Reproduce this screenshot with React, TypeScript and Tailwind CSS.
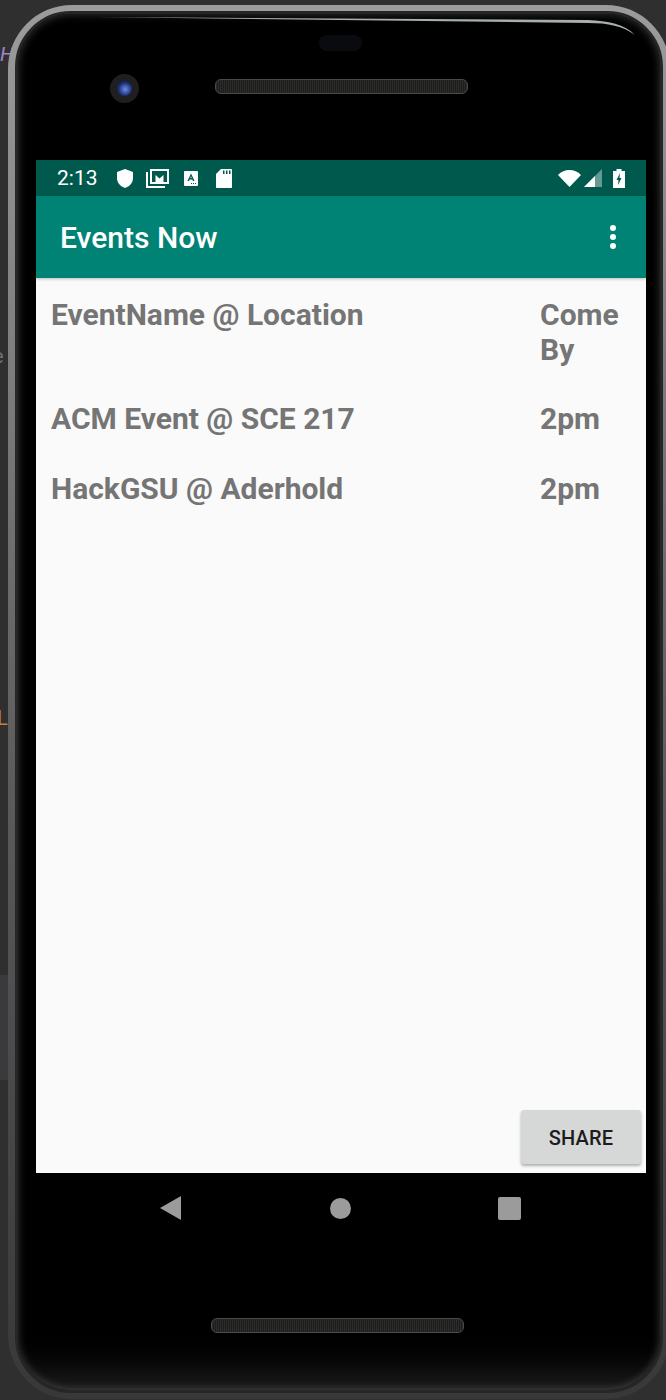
import React from "react";

const font = { fontFamily: "Roboto, sans-serif" };

function Speaker({ className }: { className: string }) {
  return (
    <div
      className={`h-[15px] w-[253px] rounded-[6px] border border-[#4a4a4a] bg-[repeating-linear-gradient(90deg,#2c2c2a_0px,#2c2c2a_1px,#1d1d1c_1px,#1d1d1c_2px)] ${className}`}
    />
  );
}

function StatusBar() {
  return (
    <div className="flex h-9 items-center justify-between bg-[#00594d] pl-[21px] pr-[21px] text-white">
      <div className="flex items-center">
        <span className="w-[60px] text-[21px] leading-none">2:13</span>
        <svg width="16" height="19" viewBox="0 0 16 19">
          <path d="M8 0 L16 3 V9 C16 14 12.5 17.5 8 19 C3.5 17.5 0 14 0 9 V3 Z" fill="#fff" />
        </svg>
        <svg width="23" height="19" viewBox="0 0 23 19" className="ml-[13px]">
          <path d="M4 0 H23 V15 H4 Z" fill="#fff" />
          <path d="M6 2 H21 V13 H17.5 V6 L13.500 9.500 L9.500 6 V13 H6 Z" fill="#00594d" />
          <path d="M0 3 H2 V17 H19 V19 H0 Z" fill="#fff" />
        </svg>
        <svg width="14" height="15" viewBox="0 0 14 15" className="ml-[15px]">
          <rect width="14" height="15" rx="1" fill="#fff" />
          <path d="M7 2.5 L10.6 10 H9 L8.3 8.4 H5.7 L5 10 H3.4 Z M6.3 7 H7.7 L7 5.3 Z" fill="#00594d" fillRule="evenodd" />
          <path d="M7 12 H8 V13 H7 Z M9 12 H10 V13 H9 Z M11 12 H12 V13 H11 Z" fill="#00594d" />
        </svg>
        <svg width="16" height="19" viewBox="0 0 16 19" className="ml-[18px]">
          <path d="M5 0 H15 C15.6 0 16 .4 16 1 V18 C16 18.6 15.6 19 15 19 H1 C.4 19 0 18.6 0 18 V5 Z" fill="#fff" />
          <path d="M7 1.5 H8.5 V5 H7 Z M10 1.5 H11.5 V5 H10 Z M13 1.5 H14.5 V5 H13 Z" fill="#00594d" />
        </svg>
      </div>
      <div className="flex items-center">
        <svg width="23" height="17" viewBox="0 0 23 17">
          <path d="M0 5 C6 -1.600 17 -1.600 23 5 L11.500 17 Z" fill="#fff" />
        </svg>
        <svg width="18" height="18" viewBox="0 0 18 18" className="ml-[3px]">
          <path d="M18 0 V18 H0 Z" fill="#fff" fillOpacity="0.4" />
          <path d="M11 7 V18 H0 Z" fill="#fff" />
        </svg>
        <svg width="12" height="19" viewBox="0 0 12 19" className="ml-[11px]">
          <path d="M3.500 0 H8.500 V2 H12 V19 H0 V2 H3.500 Z" fill="#fff" />
          <path d="M7 4 L3.500 11 H5.500 L5 16 L8.500 9 H6.500 Z" fill="#00594d" />
        </svg>
      </div>
    </div>
  );
}

function AppBar() {
  return (
    <div className="relative z-10 flex h-[82px] items-center justify-between bg-[#008375] pl-6 pr-[30px] shadow-[0_1px_3px_rgba(0,0,0,0.25)]">
      <span className="relative top-px text-[30px] font-medium leading-none text-white">Events Now</span>
      <div className="flex flex-col gap-[3px]">
        <span className="h-[6px] w-[6px] rounded-full bg-white" />
        <span className="h-[6px] w-[6px] rounded-full bg-white" />
        <span className="h-[6px] w-[6px] rounded-full bg-white" />
      </div>
    </div>
  );
}

function Row({ left, right, className }: { left: string; right: string; className: string }) {
  return (
    <div className={`flex text-[30px] font-bold leading-[35px] text-[#757575] ${className}`}>
      <div className="w-[489px]">{left}</div>
      <div className="w-[90px]">{right}</div>
    </div>
  );
}

function Content() {
  return (
    <div className="flex h-[895px] flex-col bg-[#fafafa] pl-[15px] pr-[5px]">
      <Row className="mt-[19px]" left="EventName @ Location" right="Come By" />
      <Row className="mt-[34px]" left="ACM Event @ SCE 217" right="2pm" />
      <Row className="mt-[35px]" left="HackGSU @ Aderhold" right="2pm" />
      <div className="mt-auto mb-[9px] flex justify-end">
        <button className="flex h-[54px] w-[120px] items-center justify-center rounded-[3px] bg-[#d6d7d7] pt-[2px] text-[20px] font-medium leading-none tracking-[0.2px] text-[#1c1c1c] shadow-[0_2px_3px_rgba(0,0,0,0.3)]">
          SHARE
        </button>
      </div>
    </div>
  );
}

function NavBar() {
  return (
    <div className="flex h-[70px] items-center bg-black pl-[124px]">
      <svg width="21" height="24" viewBox="0 0 21 24">
        <path d="M21 0 V24 L0 12 Z" fill="#9b9b9b" />
      </svg>
      <span className="ml-[149px] h-[21px] w-[21px] rounded-full bg-[#9b9b9b]" />
      <span className="ml-[147px] h-[23px] w-[23px] rounded-[2px] bg-[#9b9b9b]" />
    </div>
  );
}

export default function App() {
  return (
    <div className="relative h-[1400px] w-[666px] overflow-hidden bg-[#2f2f2f] pl-2 pt-[5px]" style={font}>
      <span className="absolute left-0 top-[44px] text-[20px] italic leading-none text-[#a583c8]">H</span>
      <span className="absolute -left-[7px] top-[346px] text-[20px] leading-none text-[#6f7377]">e</span>
      <span className="absolute -left-[3px] top-[708px] text-[20px] leading-none text-[#c5813f]">L</span>
      <div className="absolute bottom-[320px] left-0 top-[975px] w-2 bg-[#3a3a3c]" />

      <div className="relative h-[1394px] w-[662px] rounded-[64px] bg-gradient-to-b from-[#9c9c9c] via-[#5c5c5c] via-[55%] to-[#383838] pl-[7px] pt-[6px]">
        <div className="relative h-[1382px] w-[648px] overflow-hidden rounded-[56px] border-[3px] border-[#262626] bg-gradient-to-b from-black from-[95%] to-[#1c1c1c] shadow-[inset_0_0_8px_rgba(255,255,255,0.22)]">
          <svg width="640" height="40" viewBox="0 0 640 40" className="absolute left-0 top-0">
            <path d="M78 3 L570 6 C590 7 607 10 617 21 C605 12 590 9 570 9 Z" fill="#a6aeae" />
          </svg>

          <div className="relative flex h-[146px] flex-col">
            <div className="ml-[301px] mt-[21px] h-4 w-[43px] rounded-[8px] bg-[#0a0b0f]" />
            <div className="mt-[23px] flex items-start pl-[92px]">
              <div className="flex h-[29px] w-[29px] items-center justify-center rounded-full bg-[#1f1f22]">
                <div className="h-[15px] w-[15px] rounded-full bg-[radial-gradient(circle_at_55%_55%,#6f8fe0,#1c2f7a_55%,#05081c)]" />
              </div>
              <Speaker className="ml-[76px] mt-[5px]" />
            </div>
          </div>

          <div className="relative ml-[18px] w-[610px]">
            <StatusBar />
            <AppBar />
            <Content />
            <NavBar />
          </div>

          <Speaker className="relative ml-[193px] mt-[75px]" />
        </div>
      </div>
    </div>
  );
}
